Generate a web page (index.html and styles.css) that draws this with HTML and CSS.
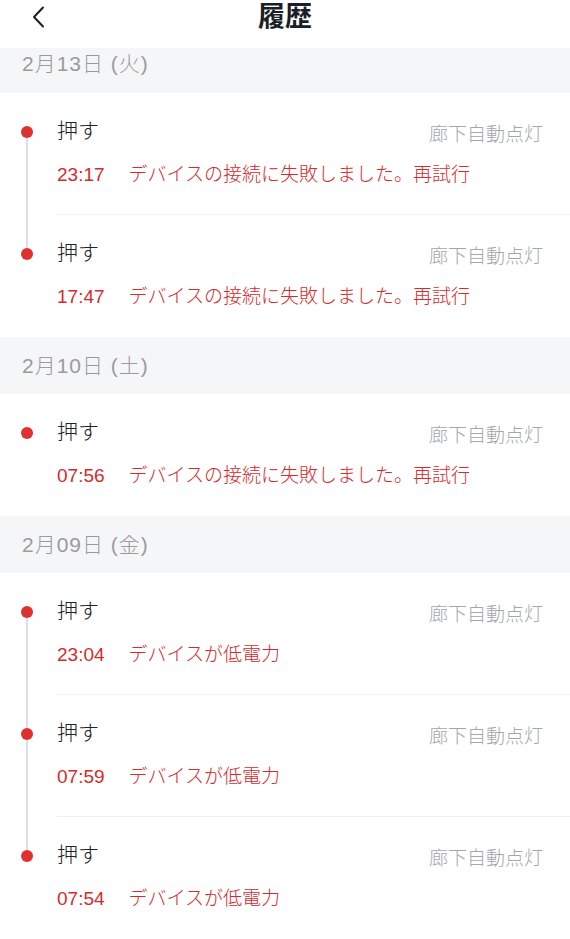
FILE: index.html
```html
<!DOCTYPE html>
<html lang="ja">
<head>
    <meta charset="UTF-8">
    <title>履歴</title>
    <link rel="stylesheet" href="styles.css">
</head>
<body>
    <header class="topbar">
        <div class="back">
            <svg width="14" height="22" viewBox="0 0 14 22"><path d="M11 1.5 L2 11 L11 20.5" fill="none" stroke="#1c1f26" stroke-width="2" stroke-linecap="round" stroke-linejoin="round"/></svg>
        </div>
        <h1 class="title">履歴</h1>
        <div></div>
    </header>

    <div class="date cut">2月13日 (火)</div>
    <div class="row">
        <div class="rail"><span class="seg"></span><span class="dot"></span><span class="seg fill on"></span></div>
        <div class="body line">
            <div class="top"><span class="action">押す</span><span class="device">廊下自動点灯</span></div>
            <div class="msg"><span class="time">23:17</span>デバイスの接続に失敗しました。再試行</div>
        </div>
    </div>
    <div class="row">
        <div class="rail"><span class="seg on"></span><span class="dot"></span><span class="seg fill"></span></div>
        <div class="body">
            <div class="top"><span class="action">押す</span><span class="device">廊下自動点灯</span></div>
            <div class="msg"><span class="time">17:47</span>デバイスの接続に失敗しました。再試行</div>
        </div>
    </div>

    <div class="date">2月10日 (土)</div>
    <div class="row">
        <div class="rail"><span class="seg"></span><span class="dot"></span><span class="seg fill"></span></div>
        <div class="body">
            <div class="top"><span class="action">押す</span><span class="device">廊下自動点灯</span></div>
            <div class="msg"><span class="time">07:56</span>デバイスの接続に失敗しました。再試行</div>
        </div>
    </div>

    <div class="date">2月09日 (金)</div>
    <div class="row">
        <div class="rail"><span class="seg"></span><span class="dot"></span><span class="seg fill on"></span></div>
        <div class="body line">
            <div class="top"><span class="action">押す</span><span class="device">廊下自動点灯</span></div>
            <div class="msg"><span class="time">23:04</span>デバイスが低電力</div>
        </div>
    </div>
    <div class="row">
        <div class="rail"><span class="seg on"></span><span class="dot"></span><span class="seg fill on"></span></div>
        <div class="body line">
            <div class="top"><span class="action">押す</span><span class="device">廊下自動点灯</span></div>
            <div class="msg"><span class="time">07:59</span>デバイスが低電力</div>
        </div>
    </div>
    <div class="row">
        <div class="rail"><span class="seg on"></span><span class="dot"></span><span class="seg fill"></span></div>
        <div class="body">
            <div class="top"><span class="action">押す</span><span class="device">廊下自動点灯</span></div>
            <div class="msg"><span class="time">07:54</span>デバイスが低電力</div>
        </div>
    </div>
</body>
</html>
```

FILE: styles.css
```css
body {
    margin: 0;
    background: #fff;
    font-family: "Liberation Sans", "Noto Sans CJK JP", sans-serif;
    font-weight: 300;
    overflow: hidden;
}

.topbar {
    display: grid;
    grid-template-columns: 1fr auto 1fr;
    height: 48px;
    background: #fff;
}

.back {
    padding: 6px 0 0 32px;
}

.title {
    margin: 0;
    font-size: 27px;
    line-height: 34px;
    font-weight: bold;
    color: #1a1e29;
}

.date {
    height: 57px;
    line-height: 57px;
    padding-left: 22px;
    background: #f5f6f8;
    color: #9b9b9b;
    font-size: 21px;
    letter-spacing: 1px;
}

    .date.cut {
        height: 45px;
        line-height: 32px;
    }

.row {
    display: flex;
    height: 122px;
}

.rail {
    width: 57px;
    flex-shrink: 0;
    display: flex;
    flex-direction: column;
}

.seg {
    width: 2px;
    height: 33px;
    margin-left: 26px;
}

    .seg.fill {
        flex: 1;
    }

    .seg.on {
        background: #dedede;
    }

.dot {
    width: 12px;
    height: 12px;
    margin-left: 21px;
    border-radius: 50%;
    background: #e03131;
}

.body {
    flex: 1;
    padding: 25px 27px 0 0;
}

    .body.line {
        border-bottom: 1px solid #efefef;
    }

.top {
    display: flex;
    justify-content: space-between;
    height: 26px;
}

.action {
    font-size: 21px;
    line-height: 26px;
    color: #222;
}

.device {
    font-size: 19px;
    line-height: 26px;
    margin-top: 4px;
    color: #a3a7ad;
}

.msg {
    margin-top: 18px;
    font-size: 19px;
    line-height: 26px;
    color: #d52b2b;
}

.time {
    margin-right: 24px;
}
```
